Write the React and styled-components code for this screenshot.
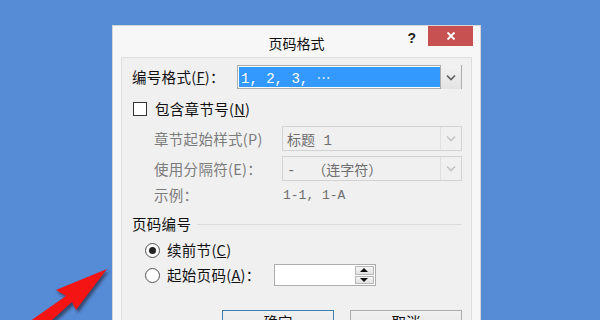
import React from 'react';
import styled, { createGlobalStyle } from 'styled-components';

const GlobalStyle = createGlobalStyle`
  html, body {
    margin: 0;
    padding: 0;
    background: #568bd5;
    overflow: hidden;
  }
  * { box-sizing: border-box; }
`;

const cjk = `"Noto Sans CJK SC", "Noto Sans", sans-serif`;

export default function App() {
  return (
    <>
      <GlobalStyle />
      <Desktop>
        <Window>
          <TitleBar>
            <Title>页码格式</Title>
            <Help>?</Help>
            <Close>
              <svg width="10" height="10" viewBox="0 0 10 10">
                <path d="M1.5 1.5 L8.5 8.5 M8.5 1.5 L1.5 8.5" stroke="#fff" strokeWidth="1.8" />
              </svg>
            </Close>
          </TitleBar>
          <Panel>
            <FormatRow>
              <Label>编号格式(<Key>F</Key>)：</Label>
              <Combo>
                <ComboText selected>1, 2, 3, ⋯</ComboText>
                <Drop><Chevron /></Drop>
              </Combo>
            </FormatRow>

            <CheckRow>
              <Checkbox />
              <Label>包含章节号(<Key>N</Key>)</Label>
            </CheckRow>

            <Fields>
              <Label disabled>章节起始样式(P)</Label>
              <Combo disabled>
                <ComboText disabled>标题 1</ComboText>
                <Drop disabled><Chevron disabled /></Drop>
              </Combo>
              <Label disabled>使用分隔符(E)：</Label>
              <Combo disabled>
                <ComboText disabled>-&nbsp;&nbsp;（连字符）</ComboText>
                <Drop disabled><Chevron disabled /></Drop>
              </Combo>
              <Label disabled>示例：</Label>
              <Example>1-1, 1-A</Example>
            </Fields>

            <GroupHead>
              <Label>页码编号</Label>
              <Rule />
            </GroupHead>

            <RadioRow>
              <Radio checked />
              <Label>续前节(<Key>C</Key>)</Label>
            </RadioRow>
            <RadioRow>
              <Radio />
              <Label>起始页码(<Key>A</Key>)：</Label>
              <Spin>
                <SpinInput />
                <SpinButtons>
                  <SpinBtn><Tri up /></SpinBtn>
                  <SpinBtn><Tri /></SpinBtn>
                </SpinButtons>
              </Spin>
            </RadioRow>

            <Buttons>
              <Button primary>确定</Button>
              <Button>取消</Button>
            </Buttons>
          </Panel>
        </Window>
        <Arrow width="140" height="90" viewBox="0 240 140 90">
          <defs>
            <filter id="sh" x="-20%" y="-20%" width="150%" height="150%">
              <feGaussianBlur stdDeviation="1.5" />
            </filter>
          </defs>
          <polygon
            points="109,271 57,292 67,298 28,327 43,333 74,305 78,313"
            fill="#1a1a2a"
            opacity="0.6"
            filter="url(#sh)"
          />
          <polygon points="107,269 56,290 66,296 26,324 41,330 72,302 76,310" fill="#f41414" />
        </Arrow>
      </Desktop>
    </>
  );
}

function Chevron({ disabled }) {
  return (
    <svg width="10" height="7" viewBox="0 0 10 7">
      <path d="M1 1.5 L5 5.5 L9 1.5" fill="none" stroke={disabled ? '#c4c4c4' : '#606060'} strokeWidth="1.6" />
    </svg>
  );
}

const Desktop = styled.div`
  position: relative;
  width: 600px;
  height: 320px;
  padding: 25px 0 0 112px;
  overflow: hidden;
`;

const Window = styled.div`
  width: 369px;
  height: 320px;
  background: #f7f7f7;
  border: 1px solid #d6d6d6;
  border-bottom: none;
  display: flex;
  flex-direction: column;
`;

const TitleBar = styled.div`
  height: 31px;
  position: relative;
  display: flex;
  align-items: flex-start;
  justify-content: flex-end;
  padding-right: 7px;
`;

const Title = styled.div`
  position: absolute;
  left: 0;
  right: 0;
  top: 8px;
  text-align: center;
  font-family: ${cjk};
  font-size: 14px;
  line-height: 18px;
  color: #111;
`;

const Help = styled.div`
  margin-top: 4px;
  margin-right: 12px;
  font-family: "Liberation Sans", sans-serif;
  font-weight: bold;
  font-size: 14px;
  color: #222;
`;

const Close = styled.div`
  width: 45px;
  height: 20px;
  background: #c75050;
  display: flex;
  align-items: center;
  justify-content: center;
`;

const Panel = styled.div`
  flex: 1;
  margin: 0 8px;
  background: #f0f0f0;
  border: 1px solid #dedede;
  border-bottom: none;
  padding: 7px 9px 0 10px;
  font-family: ${cjk};
  font-size: 14px;
`;

const Label = styled.span`
  font-family: ${cjk};
  font-size: 14.5px;
  line-height: 18px;
  white-space: nowrap;
  letter-spacing: 0.3px;
  color: ${(p) => (p.disabled ? '#7c7c7c' : '#111')};
`;

const Key = styled.span`
  text-decoration: underline;
`;

const FormatRow = styled.div`
  display: grid;
  grid-template-columns: 105px 1fr;
  align-items: center;
  height: 24px;
`;

const Combo = styled.div`
  display: flex;
  height: ${(p) => (p.disabled ? '25px' : '24px')};
  border: 1px solid ${(p) => (p.disabled ? '#d2d2d2' : '#acacac')};
  background: ${(p) => (p.disabled ? '#f0f0f0' : '#fff')};
  padding: ${(p) => (p.disabled ? '0' : '1px')};
`;

const ComboText = styled.div`
  flex: 1;
  display: flex;
  align-items: center;
  padding-left: ${(p) => (p.disabled ? '4px' : '2px')};
  background: ${(p) => (p.selected ? '#3399ff' : 'transparent')};
  color: ${(p) => (p.selected ? '#fff' : p.disabled ? '#6e6e6e' : '#000')};
  font-family: "Liberation Mono", "Noto Sans CJK SC", monospace;
  font-size: 14px;
  white-space: pre;
`;

const Drop = styled.div`
  width: 21px;
  margin: ${(p) => (p.disabled ? '0' : '-2px -1px -2px 0')};
  border-left: 1px solid ${(p) => (p.disabled ? '#e0e0e0' : '#acacac')};
  background: ${(p) => (p.disabled ? '#f0f0f0' : 'linear-gradient(#f2f2f2, #e3e3e3)')};
  display: flex;
  align-items: center;
  justify-content: center;
`;

const CheckRow = styled.div`
  display: flex;
  align-items: center;
  gap: 8px;
  height: 20px;
  margin-top: 10px;
  padding-left: 1px;
`;

const Checkbox = styled.div`
  width: 14px;
  height: 14px;
  background: #fff;
  border: 1px solid #333;
`;

const Fields = styled.div`
  display: grid;
  grid-template-columns: 128px 1fr;
  grid-template-rows: 25px 25px 18px;
  row-gap: 5px;
  align-items: center;
  margin-top: 7px;
  padding-left: 22px;
`;

const Example = styled.span`
  padding-left: 1px;
  font-family: "Liberation Mono", "Noto Sans CJK SC", monospace;
  font-size: 13px;
  color: #6e6e6e;
`;

const GroupHead = styled.div`
  display: flex;
  align-items: center;
  gap: 6px;
  margin-top: 11px;
  margin-bottom: 6px;
  height: 18px;
`;

const Rule = styled.div`
  flex: 1;
  height: 1px;
  background: #dcdcdc;
`;

const RadioRow = styled.div`
  display: flex;
  align-items: center;
  gap: 7px;
  height: 22px;
  margin-top: 3px;
  padding-left: 13px;
`;

const Radio = styled.div`
  width: 15px;
  height: 15px;
  border-radius: 50%;
  border: 1px solid #555;
  background: radial-gradient(circle, #fff 60%, #ececec);
  display: flex;
  align-items: center;
  justify-content: center;
  flex-shrink: 0;
  &::after {
    content: '';
    width: 7px;
    height: 7px;
    border-radius: 50%;
    background: ${(p) => (p.checked ? '#222' : 'transparent')};
  }
`;

const Spin = styled.div`
  display: flex;
  width: 102px;
  height: 22px;
  margin-left: 6px;
  border: 1px solid #acacac;
  background: #fff;
`;

const SpinInput = styled.div`
  flex: 1;
`;

const SpinButtons = styled.div`
  width: 20px;
  display: flex;
  flex-direction: column;
  gap: 1px;
  padding: 1px 1px 1px 0;
`;

const SpinBtn = styled.div`
  flex: 1;
  border: 1px solid #b8b8b8;
  background: linear-gradient(#f4f4f4, #e2e2e2);
  display: flex;
  align-items: center;
  justify-content: center;
`;

const Tri = styled.div`
  width: 0;
  height: 0;
  border-left: 4px solid transparent;
  border-right: 4px solid transparent;
  ${(p) => (p.up ? 'border-bottom: 4px solid #111;' : 'border-top: 4px solid #111;')}
`;

const Buttons = styled.div`
  display: flex;
  justify-content: flex-end;
  gap: 16px;
  margin-top: 24px;
`;

const Button = styled.div`
  width: 112px;
  height: 23px;
  border: 1px solid ${(p) => (p.primary ? '#3c7fb1' : '#acacac')};
  background: linear-gradient(#f0f0f0, #e5e5e5);
  display: flex;
  align-items: center;
  justify-content: center;
  font-family: ${cjk};
  font-size: 14.5px;
  color: #111;
`;

const Arrow = styled.svg`
  position: absolute;
  left: 0;
  top: 240px;
  pointer-events: none;
`;
